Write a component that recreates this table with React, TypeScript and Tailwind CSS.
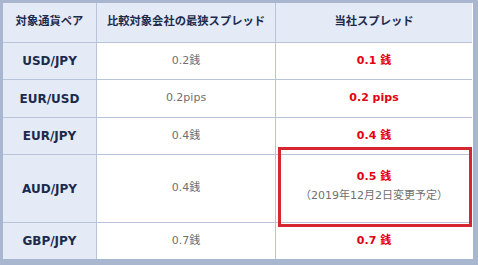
import React from "react";

const rows = [
  { pair: "USD/JPY", other: "0.2銭", ours: "0.1 銭", h: "h-[37px]" },
  { pair: "EUR/USD", other: "0.2pips", ours: "0.2 pips", h: "h-[38px]" },
  { pair: "EUR/JPY", other: "0.4銭", ours: "0.4 銭", h: "h-[37px]" },
  { pair: "AUD/JPY", other: "0.4銭", ours: "0.5 銭", h: "h-[68px]", note: "（2019年12月2日変更予定）" },
  { pair: "GBP/JPY", other: "0.7銭", ours: "0.7 銭", h: "h-[36px]", last: true },
];

export default function App() {
  return (
    <div
      className="w-[478px] h-[265px] bg-white border-t-[3px] border-l-[3px] border-r-[5px] border-b-[6px] border-[#a9b6cf]"
      style={{ fontFamily: '"DejaVu Sans", "Noto Sans CJK JP", sans-serif' }}
    >
      <div className="border-r border-white">
        {/* Header */}
        <div className="flex h-[40px] bg-[#e4ebf7] border-b border-[#b9c4da] text-[11.3px] font-bold text-[#1c2a4c]">
          <div className="w-[94px] flex items-center justify-center border-r border-[#b9c4da]">
            対象通貨ペア
          </div>
          <div className="w-[179px] flex items-center justify-center border-r border-[#b9c4da]">
            比較対象会社の最狭スプレッド
          </div>
          <div className="flex-1 flex items-center justify-center">当社スプレッド</div>
        </div>

        {/* Body */}
        {rows.map((r) => (
          <div
            key={r.pair}
            className={`flex ${r.h} ${r.last ? "" : "border-b border-[#b9c4da]"}`}
          >
            <div className="w-[94px] flex items-center justify-center bg-[#e4ebf7] border-r border-[#b9c4da] text-[12px] font-bold text-[#1c2a4c]">
              {r.pair}
            </div>
            <div className="w-[179px] flex items-center justify-center border-r border-[#b9c4da] text-[11px] text-[#707070]">
              {r.other}
            </div>
            <div className="relative flex-1 flex flex-col items-center justify-center">
              {r.note ? (
                <>
                  <div className="flex flex-col items-center pb-[6px]">
                    <span className="text-[11px] font-bold text-[#e50012] leading-[19px]">{r.ours}</span>
                    <span className="text-[11px] text-[#707070] leading-[19px]">{r.note}</span>
                  </div>
                  <div className="absolute -top-[8px] -bottom-[5px] left-[2px] right-0 border-[3px] border-[#d7262f] z-10" />
                </>
              ) : (
                <span className="text-[11px] font-bold text-[#e50012]">{r.ours}</span>
              )}
            </div>
          </div>
        ))}
      </div>
    </div>
  );
}
